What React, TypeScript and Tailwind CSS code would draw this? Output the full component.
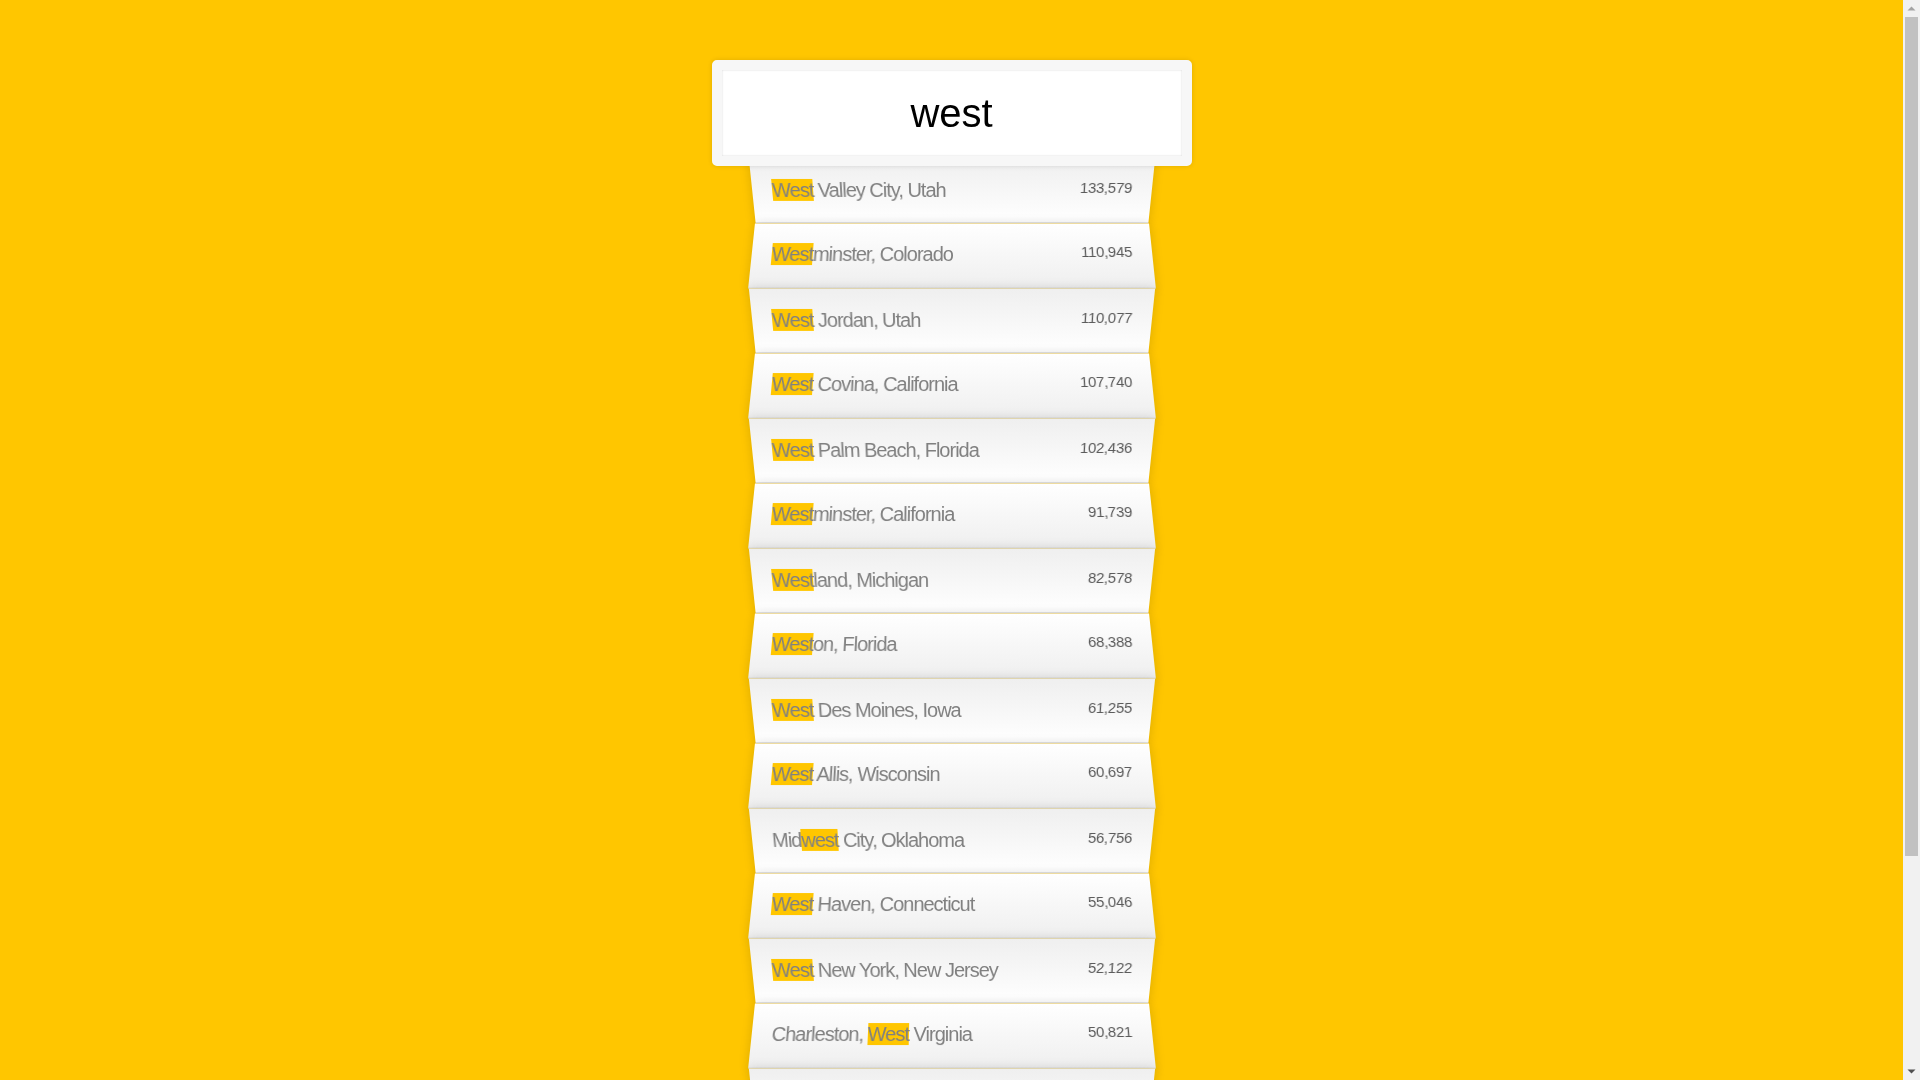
import React from "react";

type City = { name: string; pop: string };

const cities: City[] = [
  { name: "West Valley City, Utah", pop: "133,579" },
  { name: "Westminster, Colorado", pop: "110,945" },
  { name: "West Jordan, Utah", pop: "110,077" },
  { name: "West Covina, California", pop: "107,740" },
  { name: "West Palm Beach, Florida", pop: "102,436" },
  { name: "Westminster, California", pop: "91,739" },
  { name: "Westland, Michigan", pop: "82,578" },
  { name: "Weston, Florida", pop: "68,388" },
  { name: "West Des Moines, Iowa", pop: "61,255" },
  { name: "West Allis, Wisconsin", pop: "60,697" },
  { name: "Midwest City, Oklahoma", pop: "56,756" },
  { name: "West Haven, Connecticut", pop: "55,046" },
  { name: "West New York, New Jersey", pop: "52,122" },
  { name: "Charleston, West Virginia", pop: "50,821" },
  { name: "West Sacramento, California", pop: "49,891" },
  { name: "Westfield, Massachusetts", pop: "41,301" },
  { name: "Westerville, Ohio", pop: "37,530" },
  { name: "West Hollywood, California", pop: "35,072" },
];

function Highlight({ text, q }: { text: string; q: string }) {
  const i = text.toLowerCase().indexOf(q.toLowerCase());
  if (i < 0) return <>{text}</>;
  return (
    <>
      {text.slice(0, i)}
      <span className="bg-[#ffc600]">{text.slice(i, i + q.length)}</span>
      {text.slice(i + q.length)}
    </>
  );
}

function Scrollbar() {
  return (
    <div className="w-[17px] h-full shrink-0 bg-[#f1f1f1] flex flex-col">
      <div className="h-[17px] flex items-center justify-center">
        <svg width="9" height="5" viewBox="0 0 9 5">
          <path d="M0.5 4.5 L4.5 0.5 L8.5 4.5 Z" fill="#a3a3a3" />
        </svg>
      </div>
      <div className="flex-1 flex flex-col">
        <div className="h-[839px] mx-[2px] bg-[#c1c1c1]" />
      </div>
      <div className="h-[17px] flex items-center justify-center">
        <svg width="9" height="5" viewBox="0 0 9 5">
          <path d="M0.5 0.5 L8.5 0.5 L4.5 4.5 Z" fill="#505050" />
        </svg>
      </div>
    </div>
  );
}

export default function App() {
  const q = "west";
  return (
    <div className="h-screen w-full flex overflow-hidden">
      <div className="flex-1 h-full overflow-hidden bg-[#ffc600]">
        <div className="pt-[50px] pb-[50px] font-['Liberation_Sans',Arial,sans-serif] text-[20px] leading-[normal]">
          <form className="max-w-[400px] mx-auto" onSubmit={(e) => e.preventDefault()}>
            <input
              type="text"
              className="relative left-[-10%] top-[10px] z-[2] w-[120%] block box-border m-0 p-[20px] text-center outline-none border-[10px] border-solid border-[#F7F7F7] rounded-[5px] text-[40px] leading-[46px] text-black font-normal bg-white shadow-[0_0_5px_rgba(0,0,0,0.12),inset_0_0_2px_rgba(0,0,0,0.19)] font-['Liberation_Sans',Arial,sans-serif]"
              defaultValue={q}
              readOnly
            />
            <ul className="m-0 p-0 relative list-none">
              {cities.map((c, idx) => (
                <li
                  key={c.name}
                  className={
                    idx % 2 === 0
                      ? "flex justify-between capitalize m-0 p-[20px] border-b border-solid border-[#D8D8D8] shadow-[0_0_10px_rgba(0,0,0,0.14)] bg-[linear-gradient(to_top,#ffffff_0%,#EFEFEF_100%)] [transform:perspective(100px)_rotateX(-3deg)_translateY(3px)]"
                      : "flex justify-between capitalize m-0 p-[20px] border-b border-solid border-[#D8D8D8] shadow-[0_0_10px_rgba(0,0,0,0.14)] bg-[linear-gradient(to_bottom,#ffffff_0%,#EFEFEF_100%)] [transform:perspective(100px)_rotateX(3deg)_translateY(2px)_scale(1.001)]"
                  }
                >
                  <span className="text-[#808080] tracking-[-1px] leading-[23px] mb-px">
                    <Highlight text={c.name} q={q} />
                  </span>
                  <span className="text-[15px] text-[#5a5a5a] tracking-[-0.3px] leading-[18px]">{c.pop}</span>
                </li>
              ))}
            </ul>
          </form>
        </div>
      </div>
      <Scrollbar />
    </div>
  );
}
